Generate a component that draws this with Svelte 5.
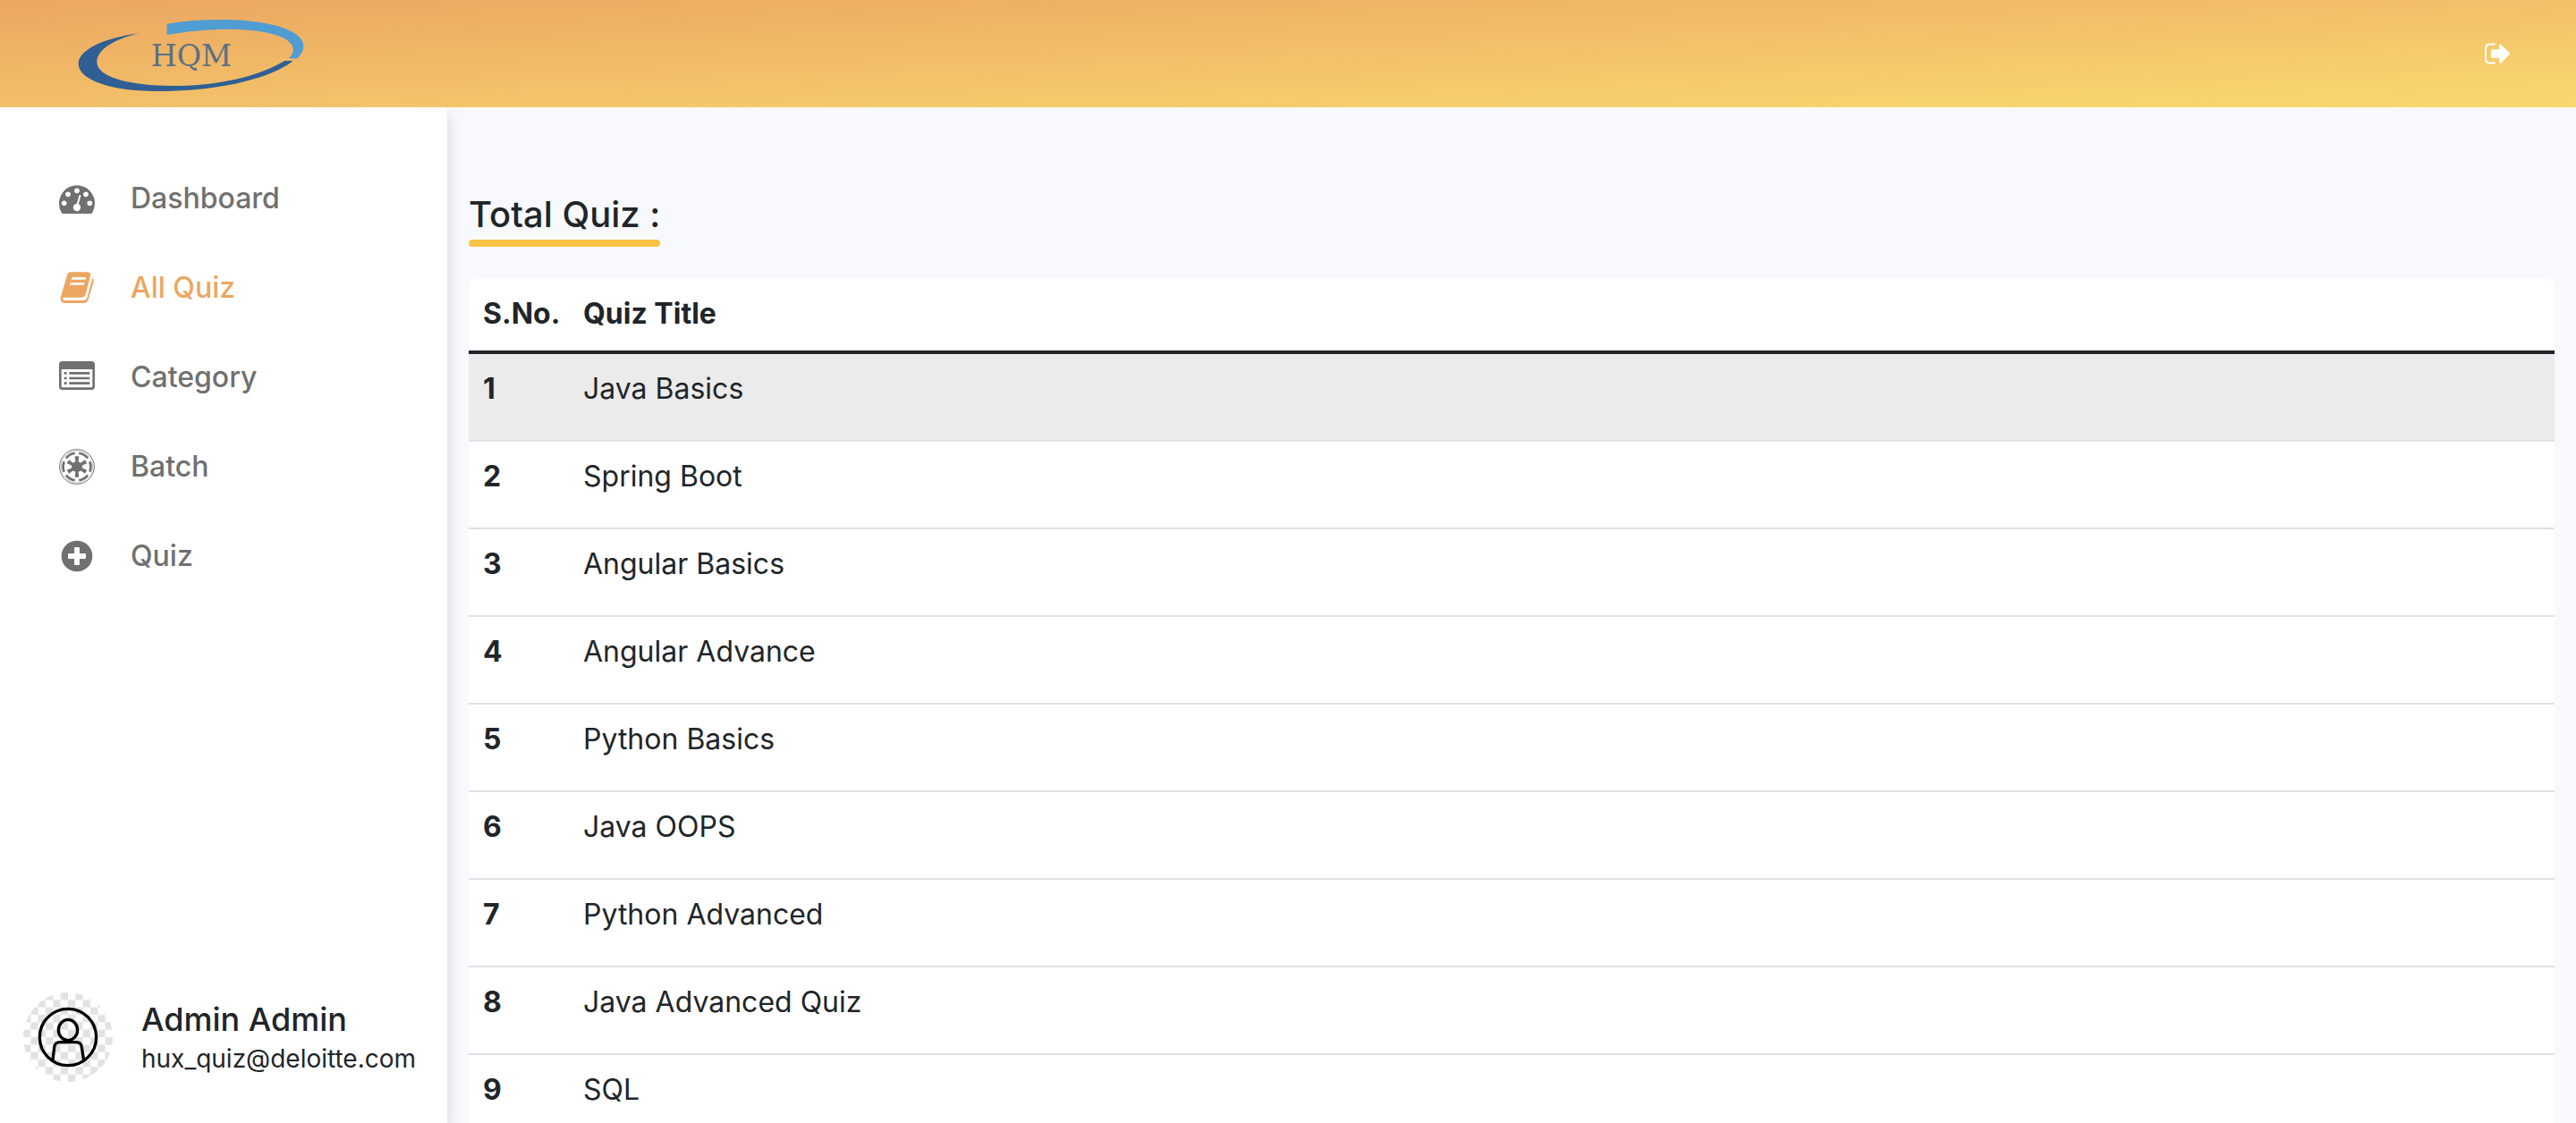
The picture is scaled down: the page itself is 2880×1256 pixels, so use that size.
<script>
  const nav = [
    { label: 'Dashboard', icon: 'gauge' },
    { label: 'All Quiz', icon: 'book', active: true },
    { label: 'Category', icon: 'list' },
    { label: 'Batch', icon: 'wheel' },
    { label: 'Quiz', icon: 'plus' }
  ];
  const quizzes = [
    'Java Basics',
    'Spring Boot',
    'Angular Basics',
    'Angular Advance',
    'Python Basics',
    'Java OOPS',
    'Python Advanced',
    'Java Advanced Quiz',
    'SQL'
  ];
  const spokes = [0, 60, 120, 180, 240, 300];
</script>

<div class="page">
  <header>
    <a class="logo" href="#home" aria-label="HQM home">
      <svg viewBox="0 0 960 360" aria-hidden="true">
        <path fill="#2f5f95" d="M286 112C170 127 83 167 83 214C83 268 190 306 345 306C560 306 730 262 803 204L775 204C690 254 560 288 400 288C250 288 145 258 145 208C145 168 200 132 286 112Z" />
        <path fill="#509dd3" d="M380 80C440 70 500 66 565 66C730 66 838 104 838 154C838 170 830 184 815 197L788 195C800 186 803 176 803 165C803 124 710 98 590 98C515 98 445 105 380 117Z" />
        <text x="462" y="222" text-anchor="middle">HQM</text>
      </svg>
    </a>
    <button class="logout" aria-label="Log out">
      <svg viewBox="0 0 84 70" aria-hidden="true">
        <path fill="none" stroke="#fff" stroke-width="6" stroke-linecap="round" d="M33 3.500H18Q3 3.500 3 18V52Q3 66.500 18 66.500H33" />
        <path fill="#fff" d="M24 21H49V6Q49 0 54 4L83 32Q85 35 83 38L54 67Q49 70 49 64V49H24Q21 49 21 46V24Q21 21 24 21Z" />
      </svg>
    </button>
  </header>

  <div class="body">
    <aside>
      <nav>
        {#each nav as item}
          <a href="#{item.icon}" class:active={item.active}>
            <svg viewBox="0 0 120 120" fill="currentColor" aria-hidden="true">
              {#if item.icon === 'gauge'}
                <path d="M60 16A60 60 0 0 0 0 76Q0 93 8 107Q10 111 15 111H105Q110 111 112 107Q120 93 120 76A60 60 0 0 0 60 16Z" />
                <g fill="#fff">
                  <circle cx="17" cy="76" r="8.500" />
                  <circle cx="30" cy="46" r="8.500" />
                  <circle cx="60" cy="34" r="8.500" />
                  <circle cx="90" cy="46" r="8.500" />
                  <circle cx="103" cy="76" r="8.500" />
                  <circle cx="60" cy="90" r="12.500" />
                </g>
                <path fill="none" stroke="#fff" stroke-width="6" stroke-linecap="round" d="M60 88L70 51" />
              {:else if item.icon === 'book'}
                <path d="M38 7H96Q108 8 105 20L89 82Q86 92 76 92H18Q10 94 13 99Q15 102 21 102H83Q91 102 94 94L110 35Q111 29 112 28Q118 31 116 38L99 97Q95 111 82 111H20Q3 109 5 92L27 19Q30 7 38 7Z" />
                <path fill="#fff" d="M44 24H91L88 32H41ZM39 42H86L83 50H36Z" />
              {:else if item.icon === 'list'}
                <path fill-rule="evenodd" d="M11 6H109Q120 6 120 17V91Q120 102 109 102H11Q0 102 0 91V17Q0 6 11 6ZM8 33V91Q8 94 11 94H109Q112 94 112 91V33Z" />
                <path d="M17 42h9v8h-9zM34 42h69v8H34zM17 59h9v8h-9zM34 59h69v8H34zM17 76h9v8h-9zM34 76h69v8H34z" />
              {:else if item.icon === 'wheel'}
                <circle cx="60" cy="60" r="58" fill="none" stroke="currentColor" stroke-width="3" />
                <circle cx="60" cy="60" r="53" fill="none" stroke="currentColor" stroke-width="1" />
                <circle cx="60" cy="60" r="18" />
                {#each spokes as angle}
                  <g transform="rotate({angle} 60 60)">
                    <path d="M53 25H67L64 48H56Z" />
                    <path transform="rotate(30 60 60)" d="M42 13A50 50 0 0 1 78 13L76 21A42 42 0 0 0 44 21Z" />
                  </g>
                {/each}
              {:else}
                <path fill-rule="evenodd" d="M60 8A52 52 0 1 0 60 112A52 52 0 1 0 60 8ZM54 30H66Q69 30 69 33V51H87Q90 51 90 54V66Q90 69 87 69H69V87Q69 90 66 90H54Q51 90 51 87V69H33Q30 69 30 66V54Q30 51 33 51H51V33Q51 30 54 30Z" />
              {/if}
            </svg>
            {item.label}
          </a>
        {/each}
      </nav>

      <div class="user">
        <svg viewBox="0 0 300 300" role="img" aria-label="User avatar">
          <defs>
            <pattern id="checks" width="50" height="50" patternUnits="userSpaceOnUse">
              <path fill="#fff" d="M0 0H50V50H0Z" />
              <path fill="#e2e2e2" d="M25 0H50V25H25ZM0 25H25V50H0Z" />
            </pattern>
          </defs>
          <circle cx="150" cy="150" r="150" fill="url(#checks)" />
          <g fill="none" stroke="#000" stroke-width="10">
            <circle cx="150" cy="150" r="95" />
            <ellipse cx="150" cy="126" rx="32" ry="35" />
            <path d="M99 228L104 184Q106 167 123 167H177Q194 167 196 184L203 228" />
          </g>
        </svg>
        <div>
          <p class="name">Admin Admin</p>
          <p class="mail">hux_quiz@deloitte.com</p>
        </div>
      </div>
    </aside>

    <main>
      <h1>Total Quiz :</h1>
      <table>
        <thead>
          <tr><th scope="col">S.No.</th><th scope="col">Quiz Title</th></tr>
        </thead>
        <tbody>
          {#each quizzes as title, i}
            <tr class:selected={i === 0}>
              <th scope="row">{i + 1}</th>
              <td>{title}</td>
            </tr>
          {/each}
        </tbody>
      </table>
    </main>
  </div>
</div>

<style>
  :global(body) {
    margin: 0;
    overflow: hidden;
  }
  .page {
    display: flex;
    flex-direction: column;
    height: 100vh;
    overflow: hidden;
    background: #f8f9fd;
    color: #212529;
    font-family: Inter, 'Open Sans', sans-serif;
    font-size: 32px;
    line-height: 48px;
  }
  header {
    display: flex;
    flex: none;
    align-items: center;
    justify-content: space-between;
    height: 120px;
    padding: 0 74px 0 60px;
    box-sizing: border-box;
    background: linear-gradient(to bottom right, #eca662, #f8da6e);
  }
  .logo,
  .logo svg {
    display: block;
    width: 320px;
    height: 120px;
  }
  .logo text {
    fill: #5a7186;
    font-family: 'DejaVu Serif', serif;
    font-size: 100px;
  }
  .logout {
    display: block;
    padding: 0;
    border: 0;
    background: none;
    cursor: pointer;
  }
  .logout svg {
    display: block;
    width: 28px;
    height: 24px;
  }
  .body {
    display: flex;
    flex: 1;
    min-height: 0;
  }
  aside {
    display: flex;
    flex: none;
    flex-direction: column;
    justify-content: space-between;
    width: 500px;
    padding: 52px 0 46px;
    box-sizing: border-box;
    background: #fff;
    box-shadow: 0 8px 16px rgba(0, 0, 0, 0.15);
    clip-path: inset(0 -24px 0 0);
  }
  nav a {
    display: flex;
    align-items: center;
    gap: 40px;
    height: 100px;
    padding-left: 66px;
    color: #707070;
    font-weight: 500;
    text-decoration: none;
  }
  nav a.active {
    color: #eca662;
  }
  nav svg {
    width: 40px;
    height: 40px;
  }
  .user {
    display: flex;
    align-items: center;
    gap: 32px;
    padding-left: 26px;
  }
  .user svg {
    flex: none;
    width: 100px;
    height: 100px;
  }
  .user p {
    margin: 0;
  }
  .name {
    font-size: 36px;
    font-weight: 500;
  }
  .mail {
    font-size: 28px;
    line-height: 40px;
  }
  main {
    flex: 1;
    min-width: 0;
    padding: 96px 24px 0;
    overflow: hidden;
  }
  h1 {
    width: fit-content;
    margin: 0 0 36px;
    font-size: 40px;
    font-weight: 500;
  }
  h1::after {
    display: block;
    height: 8px;
    margin-top: 4px;
    border-radius: 4px;
    background: #f8c344;
    content: '';
  }
  table {
    width: 100%;
    border-collapse: separate;
    border-spacing: 0;
    border-radius: 8px;
    background: #fff;
  }
  th,
  td {
    height: 64px;
    padding: 15px 16px 17px;
    border-bottom: 2px solid #dee2e6;
    text-align: left;
    vertical-align: top;
  }
  th {
    font-weight: 700;
  }
  th:first-child {
    width: 88px;
    padding-right: 8px;
  }
  thead th {
    height: 48px;
    border-bottom: 4px solid #212529;
  }
  .selected {
    background: #ebebeb;
  }
</style>
